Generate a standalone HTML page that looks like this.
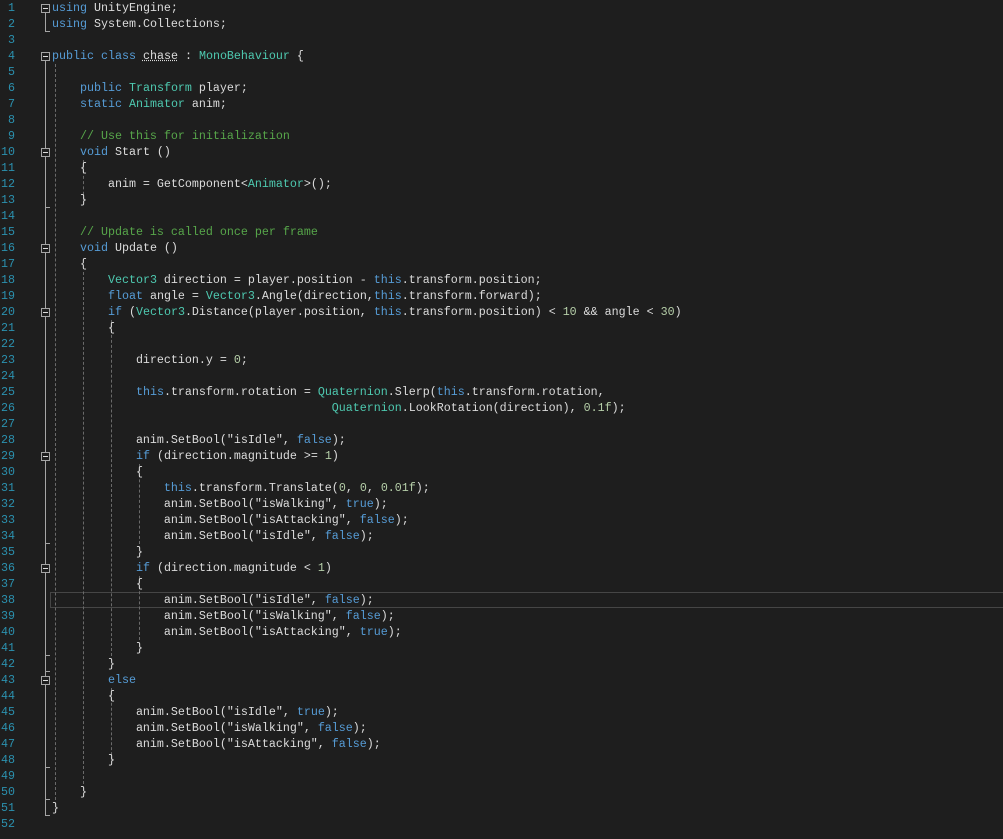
<!DOCTYPE html>
<html><head><meta charset="utf-8"><style>
body{margin:0;background:#1e1e1e;width:1003px;height:839px;overflow:hidden;position:relative;font-family:"Liberation Mono",monospace;}
.ln{position:absolute;left:0;width:15px;text-align:right;color:#2b91af;font-size:11.67px;line-height:16px;}
.c{position:absolute;left:52px;white-space:pre;color:#dcdcdc;font-size:11.67px;line-height:16px;margin:0;}
.k{color:#569cd6}.t{color:#4ec9b0}.g{color:#57a64a}.n{color:#b5cea8}
.box{position:absolute;left:41px;width:7px;height:7px;border:1px solid #a5a5a5;background:#1e1e1e;}
.box:after{content:"";position:absolute;left:1px;top:3px;width:5px;height:1px;background:#dcdcdc;}
.vl{position:absolute;left:45px;width:1px;background:#a5a5a5;}
.tk{position:absolute;left:45px;width:5px;height:1px;background:#a5a5a5;}
.gd{position:absolute;width:0;border-left:1px dashed #6a6a6a;}
.cur{position:absolute;left:50px;top:592px;width:960px;height:14px;border:1px solid #464646;}
</style></head><body>
<div class="cur"></div>
<div id="nums"></div>
<!-- structure lines -->
<div class="vl" style="top:12px;height:20px"></div><div class="tk" style="top:31px"></div>
<div class="vl" style="top:60px;height:756px"></div>
<div class="tk" style="top:207px"></div><div class="tk" style="top:543px"></div><div class="tk" style="top:655px"></div><div class="tk" style="top:671px"></div><div class="tk" style="top:767px"></div><div class="tk" style="top:799px"></div><div class="tk" style="top:815px"></div>
<div class="gd" style="left:55px;top:64px;height:736px"></div>
<div class="gd" style="left:83px;top:160px;height:40px"></div>
<div class="gd" style="left:83px;top:272px;height:512px"></div>
<div class="gd" style="left:111px;top:320px;height:336px"></div>
<div class="gd" style="left:111px;top:688px;height:72px"></div>
<div class="gd" style="left:139px;top:464px;height:80px"></div>
<div class="gd" style="left:139px;top:576px;height:64px"></div>
<div class="box" style="top:4px"></div><div class="box" style="top:52px"></div><div class="box" style="top:148px"></div><div class="box" style="top:244px"></div><div class="box" style="top:308px"></div><div class="box" style="top:452px"></div><div class="box" style="top:564px"></div><div class="box" style="top:676px"></div>
<script>
var L=[
'<span class="k">using</span> UnityEngine;',
'<span class="k">using</span> System.Collections;',
'',
'<span class="k">public</span> <span class="k">class</span> <span style="text-decoration:underline dotted">chase</span> : <span class="t">MonoBehaviour</span> {',
'',
'    <span class="k">public</span> <span class="t">Transform</span> player;',
'    <span class="k">static</span> <span class="t">Animator</span> anim;',
'',
'    <span class="g">// Use this for initialization</span>',
'    <span class="k">void</span> Start ()',
'    {',
'        anim = GetComponent&lt;<span class="t">Animator</span>&gt;();',
'    }',
'',
'    <span class="g">// Update is called once per frame</span>',
'    <span class="k">void</span> Update ()',
'    {',
'        <span class="t">Vector3</span> direction = player.position - <span class="k">this</span>.transform.position;',
'        <span class="k">float</span> angle = <span class="t">Vector3</span>.Angle(direction,<span class="k">this</span>.transform.forward);',
'        <span class="k">if</span> (<span class="t">Vector3</span>.Distance(player.position, <span class="k">this</span>.transform.position) &lt; <span class="n">10</span> &amp;&amp; angle &lt; <span class="n">30</span>)',
'        {',
'',
'            direction.y = <span class="n">0</span>;',
'',
'            <span class="k">this</span>.transform.rotation = <span class="t">Quaternion</span>.Slerp(<span class="k">this</span>.transform.rotation,',
'                                        <span class="t">Quaternion</span>.LookRotation(direction), <span class="n">0.1f</span>);',
'',
'            anim.SetBool("isIdle", <span class="k">false</span>);',
'            <span class="k">if</span> (direction.magnitude &gt;= <span class="n">1</span>)',
'            {',
'                <span class="k">this</span>.transform.Translate(<span class="n">0</span>, <span class="n">0</span>, <span class="n">0.01f</span>);',
'                anim.SetBool("isWalking", <span class="k">true</span>);',
'                anim.SetBool("isAttacking", <span class="k">false</span>);',
'                anim.SetBool("isIdle", <span class="k">false</span>);',
'            }',
'            <span class="k">if</span> (direction.magnitude &lt; <span class="n">1</span>)',
'            {',
'                anim.SetBool("isIdle", <span class="k">false</span>);',
'                anim.SetBool("isWalking", <span class="k">false</span>);',
'                anim.SetBool("isAttacking", <span class="k">true</span>);',
'            }',
'        }',
'        <span class="k">else</span>',
'        {',
'            anim.SetBool("isIdle", <span class="k">true</span>);',
'            anim.SetBool("isWalking", <span class="k">false</span>);',
'            anim.SetBool("isAttacking", <span class="k">false</span>);',
'        }',
'',
'    }',
'}',
''];
var h='';
for(var i=0;i<L.length;i++){h+='<div class="ln" style="top:'+(i*16)+'px">'+(i+1)+'</div><pre class="c" style="top:'+(i*16)+'px">'+L[i]+'</pre>';}
document.body.insertAdjacentHTML('beforeend',h);
</script>
</body></html>
